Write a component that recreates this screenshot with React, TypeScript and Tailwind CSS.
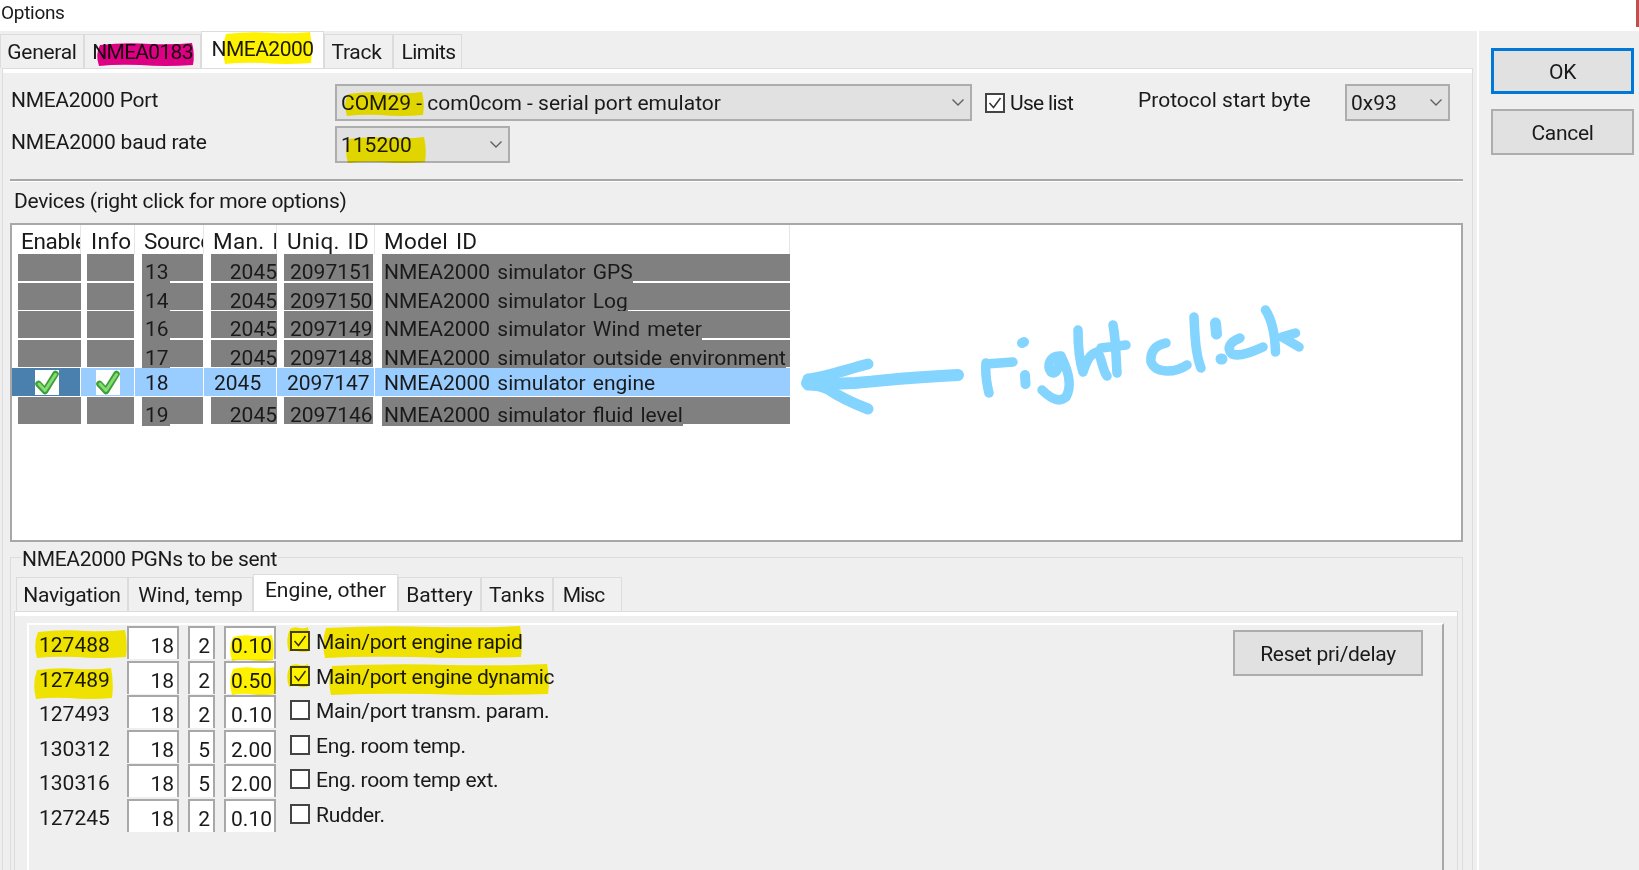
const devices = [
  { source: '13', man: '2045', uniq: '2097151', model: 'NMEA2000 simulator GPS' },
  { source: '14', man: '2045', uniq: '2097150', model: 'NMEA2000 simulator Log' },
  { source: '16', man: '2045', uniq: '2097149', model: 'NMEA2000 simulator Wind meter' },
  { source: '17', man: '2045', uniq: '2097148', model: 'NMEA2000 simulator outside environment' },
  { source: '18', man: '2045', uniq: '2097147', model: 'NMEA2000 simulator engine', selected: true },
  { source: '19', man: '2045', uniq: '2097146', model: 'NMEA2000 simulator fluid level' },
];

const pgns = [
  { pgn: '127488', src: '18', pri: '2', delay: '0.10', on: true, label: 'Main/port engine rapid' },
  { pgn: '127489', src: '18', pri: '2', delay: '0.50', on: true, label: 'Main/port engine dynamic' },
  { pgn: '127493', src: '18', pri: '2', delay: '0.10', on: false, label: 'Main/port transm. param.' },
  { pgn: '130312', src: '18', pri: '5', delay: '2.00', on: false, label: 'Eng. room temp.' },
  { pgn: '130316', src: '18', pri: '5', delay: '2.00', on: false, label: 'Eng. room temp ext.' },
  { pgn: '127245', src: '18', pri: '2', delay: '0.10', on: false, label: 'Rudder.' },
];

// marker strokes: [x1, y1, x2, y2]
const yellowMarks = [
  [223, 32, 312, 64],
  [345, 92, 424, 116],
  [346, 137, 426, 163],
  [35, 630, 127, 658],
  [34, 668, 113, 699],
  [230, 635, 274, 661],
  [230, 667, 276, 695],
  [287, 627, 310, 652],
  [323, 626, 522, 658],
  [287, 664, 310, 687],
  [329, 664, 549, 695],
];

function blob(x1: number, y1: number, x2: number, y2: number) {
  const w = x2 - x1;
  const my = (y1 + y2) / 2;
  return `M${x1 + 3} ${y1 + 2} Q${x1 + w * 0.3} ${y1 - 1} ${x1 + w * 0.55} ${y1 + 1} Q${x1 + w * 0.8} ${y1 + 2} ${x2 - 2} ${y1}
    Q${x2 + 1} ${my} ${x2 - 1} ${y2 - 1} Q${x1 + w * 0.7} ${y2 + 1} ${x1 + w * 0.45} ${y2 - 1} Q${x1 + w * 0.2} ${y2 - 2} ${x1 + 2} ${y2}
    Q${x1 - 2} ${my} ${x1 + 3} ${y1 + 2}Z`;
}

function Chevron() {
  return (
    <svg width="14" height="9" viewBox="0 0 14 9" fill="none" className="shrink-0">
      <path d="M1.5 1.5 7 7l5.500-5.500" stroke="#606060" strokeWidth="1.4" />
    </svg>
  );
}

function Combo({ value, className }: { value: string; className: string }) {
  return (
    <div className={`flex h-[37px] items-center justify-between border-2 border-[#adadad] bg-[#e1e1e1] pl-[4px] pr-[5px] tracking-normal ${className}`}>
      <span className="pt-[2px]">{value}</span>
      <Chevron />
    </div>
  );
}

function CheckBox({ on, className = '' }: { on: boolean; className?: string }) {
  return (
    <div className={`flex h-[20px] w-[20px] shrink-0 items-center justify-center border-2 border-[#444] bg-white ${className}`}>
      {on && (
        <svg width="16" height="16" viewBox="0 0 16 16" fill="none">
          <path d="M2.500 8 6.500 12.500 13.500 3" stroke="#333" strokeWidth="1.5" />
        </svg>
      )}
    </div>
  );
}

function GreenCheck() {
  return (
    <div className="flex h-[25px] w-[24px] items-center justify-center bg-white">
      <svg width="24" height="25" viewBox="0 0 24 25" fill="none" className="overflow-visible">
        <path d="M3.500 14 10 21 20.500 4" stroke="#3d9e3a" strokeWidth="6.500" strokeLinecap="round" strokeLinejoin="round" />
        <path d="M4 14 10 20.500 20.500 4.500" stroke="#84dd72" strokeWidth="3" strokeLinecap="round" strokeLinejoin="round" />
      </svg>
    </div>
  );
}

function DeviceRow({ d }: { d: (typeof devices)[number] }) {
  if (d.selected) {
    return (
      <div className="flex h-[28.5px] items-start gap-px">
        <div className="flex h-[28px] w-[68px] items-center justify-center bg-[#4a80ae] pl-[1px]"><GreenCheck /></div>
        <div className="flex h-[28px] w-[53px] items-center justify-center bg-[#99ccff]"><GreenCheck /></div>
        <div className="h-[28px] w-[68px] bg-[#99ccff] pl-[10px] leading-[31px]">{d.source}</div>
        <div className="h-[28px] w-[72px] bg-[#99ccff] pl-[10px] leading-[31px]">{d.man}</div>
        <div className="h-[28px] w-[97px] bg-[#99ccff] pl-[10px] leading-[31px]">{d.uniq}</div>
        <div className="h-[28px] w-[415px] bg-[#99ccff] pl-[9px] leading-[31px]">{d.model}</div>
      </div>
    );
  }
  // the text's grey backing runs over the white row line, the rest of the cell stops short of it
  const textBg = 'inline-block h-[29px] bg-[#808080] leading-[37px]';
  return (
    <div className="flex h-[28.5px]">
      <div className="w-[69px] pl-[6px]"><div className="h-[27px] bg-[#808080]" /></div>
      <div className="w-[54px] pl-[6px] pr-px"><div className="h-[27px] bg-[#808080]" /></div>
      <div className="w-[69px] pl-[7px] pr-px">
        <div className="h-[27px] bg-[#808080]"><span className={`${textBg} pl-[3px] pr-[1px]`}>{d.source}</span></div>
      </div>
      <div className="w-[73px] pl-[7px]">
        <div className="h-[27px] bg-[#808080] text-right leading-[37px]">{d.man}</div>
      </div>
      <div className="w-[98px] pl-[7px] pr-[2px]">
        <div className="h-[27px] bg-[#808080] pl-[6px] leading-[37px]">{d.uniq}</div>
      </div>
      <div className="w-[415px] pl-[7px]">
        <div className="h-[27px] whitespace-nowrap bg-[#808080]"><span className={`${textBg} pl-[2px]`}>{d.model}</span></div>
      </div>
    </div>
  );
}

function HeaderCell({ text, className }: { text: string; className: string }) {
  return (
    <div className={`h-full overflow-hidden whitespace-nowrap border-r border-[#e6e6e6] text-[22.5px] leading-[32px] ${className}`}>
      {text}
    </div>
  );
}

function PgnInput({ value, className }: { value: string; className: string }) {
  return (
    <div className={`h-[33px] border-x-2 border-t-2 border-[#a8a8a8] bg-white text-right leading-[36px] tracking-normal ${className}`}>
      {value}
    </div>
  );
}

function Annotations() {
  const stroke = '#83d4ff';
  return (
    <svg width="1639" height="870" viewBox="0 0 1639 870" fill="none" className="pointer-events-none absolute left-0 top-0">
      <g stroke={stroke} strokeLinecap="round" strokeLinejoin="round" strokeWidth="12">
        {/* arrow */}
        <path d="M958 375C910 377 880 381 855 383C835 384 820 384 807 383" />
        <path d="M868 364C845 370 825 377 808 379" strokeWidth="11" />
        <path d="M868 409C850 402 838 396 828 389C820 385 812 385 808 385" strokeWidth="11" />
      </g>
      <g stroke={stroke} strokeLinecap="round" strokeLinejoin="round" strokeWidth="9.500">
        {/* r */}
        <path d="M986 363C985 375 987 385 989 393M986 364 1013 362" />
        {/* i */}
        <path d="M1022 343 1024 342M1025 375 1025.500 384" strokeWidth="10" />
        {/* g */}
        <path d="M1061 356C1050 355 1046 366 1051 372C1057 376 1059 366 1061 356C1068 370 1073 385 1066 397C1058 404 1048 396 1042 390" />
        {/* h */}
        <path d="M1078 330C1078 345 1079 360 1083 372C1087 360 1090 354 1097 352C1102 356 1102 370 1107 376" />
        {/* t */}
        <path d="M1113 325C1116 340 1116 358 1117 373M1101 348 1126 345" />
        {/* c */}
        <path d="M1166 343C1155 345 1150 352 1151 362C1156 374 1175 373 1187 365" />
        {/* l */}
        <path d="M1194 317C1195 340 1196 355 1201 368" />
        {/* i */}
        <path d="M1215.500 323 1216.500 334M1221 359 1222 359" strokeWidth="11" />
        {/* c */}
        <path d="M1240 338C1230 342 1226 348 1232 354C1240 357 1252 352 1263 347" />
        {/* k */}
        <path d="M1265.500 310C1272 320 1275 335 1275.500 352M1295.500 333 1282 337 1299 347" />
      </g>
    </svg>
  );
}

function Highlights() {
  return (
    <svg width="1639" height="870" viewBox="0 0 1639 870" className="pointer-events-none absolute left-0 top-0 mix-blend-multiply">
      <path d={blob(97, 43, 194, 66)} fill="#ec008c" />
      {yellowMarks.map((m) => (
        <path key={m.join()} d={blob(m[0], m[1], m[2], m[3])} fill="#fff200" />
      ))}
    </svg>
  );
}

export default function App() {
  const tabBase = 'flex h-[34px] items-center justify-center border-x border-t border-[#dcdcdc] bg-[#f0f0f0] pt-[2px]';
  const tabActive = 'flex items-start justify-center border-x border-t border-[#dcdcdc] bg-white';

  return (
    <div className="relative flex h-[870px] w-[1639px] flex-col overflow-hidden bg-[#efefef] font-['Roboto',sans-serif] text-[21px] tracking-[-0.3px] text-[#1a1a1a]">
      {/* title bar */}
      <div className="flex h-[31px] shrink-0 items-start justify-between bg-white pl-[1px]">
        <span className="text-[19px] leading-[26px]">Options</span>
        <div className="h-[27px] w-[3px] bg-[#c0504d]" />
      </div>

      <div className="flex min-h-0 flex-1">
        <div className="flex w-[1473px] shrink-0 flex-col">
          {/* main tabs */}
          <div className="flex h-[37px] shrink-0 items-end">
            <div className={`${tabBase} w-[84px]`}>General</div>
            <div className={`${tabBase} w-[117px] tracking-[-0.7px]`}>NMEA0183</div>
            <div className={`${tabActive} h-[37px] w-[123px] pt-[2px] tracking-[-0.5px]`}>NMEA2000</div>
            <div className={`${tabBase} w-[69px] pr-[4px]`}>Track</div>
            <div className={`${tabBase} w-[69px] pl-[2px] tracking-[-0.6px]`}>Limits</div>
          </div>

          {/* main panel */}
          <div className="ml-[2px] min-h-0 flex-1 border-x border-t border-[#dcdcdc] pb-0 pl-[7px] pr-[9px] pt-[15px] shadow-[inset_0_4px_0_#ffffff]">
            <div className="flex items-start">
              <span className="ml-[1px] w-[324px] shrink-0 pt-[1px] leading-[30px]">NMEA2000 Port</span>
              <Combo value="COM29 - com0com - serial port emulator" className="w-[637px]" />
              <CheckBox on className="ml-[13px] mt-[9px]" />
              <span className="ml-[5px] w-[128px] shrink-0 pt-[4px] leading-[30px] tracking-[-0.7px]">Use list</span>
              <span className="w-[207px] shrink-0 pt-[1px] leading-[30px] tracking-[0px]">Protocol start byte</span>
              <Combo value="0x93" className="w-[105px]" />
            </div>
            <div className="mt-[5px] flex items-start">
              <span className="ml-[1px] w-[324px] shrink-0 pt-[1px] leading-[30px] tracking-[-0.2px]">NMEA2000 baud rate</span>
              <Combo value="115200" className="w-[175px]" />
            </div>

            <div className="mt-[16px] h-[3px] border-b border-white bg-[#a8a8a8]" />
            <div className="ml-[4px] mt-[4px] h-[37px] leading-[30px]">Devices (right click for more options)</div>

            {/* device table */}
            <div className="h-[319px] border-2 border-[#a8a8a8] bg-white tracking-normal [word-spacing:2px]">
              <div className="flex h-[29px]">
                <HeaderCell text="Enable" className="w-[69px] pl-[9px] tracking-[-0.3px]" />
                <HeaderCell text="Info" className="w-[54px] pl-[10px] tracking-[0.3px]" />
                <HeaderCell text="Source" className="w-[69px] pl-[9px] tracking-[-0.3px]" />
                <HeaderCell text="Man. ID" className="w-[73px] pl-[9px] tracking-[0.3px]" />
                <HeaderCell text="Uniq. ID" className="w-[98px] pl-[10px] tracking-[0.3px]" />
                <HeaderCell text="Model ID" className="w-[415px] pl-[9px] tracking-[0.3px]" />
              </div>
              {devices.map((d) => (
                <DeviceRow key={d.source} d={d} />
              ))}
            </div>

            {/* PGN group */}
            <div className="relative mt-[15px] border border-[#dcdcdc] pl-[5px] pr-[4px] pt-[16px]">
              <span className="absolute -top-[13px] left-[10px] bg-[#efefef] pl-[1px] pr-[1px] leading-[28px]">NMEA2000 PGNs to be sent</span>
              <div className="flex h-[37px] items-end tracking-normal">
                <div className={`${tabBase} w-[112px] tracking-[-0.3px]`}>Navigation</div>
                <div className={`${tabBase} w-[125px]`}>Wind, temp</div>
                <div className={`${tabActive} h-[37px] w-[145px]`}>Engine, other</div>
                <div className={`${tabBase} w-[83px]`}>Battery</div>
                <div className={`${tabBase} w-[72px]`}>Tanks</div>
                <div className={`${tabBase} w-[69px] pr-[8px] tracking-[-1px]`}>Misc</div>
              </div>

              <div className="ml-[-2px] h-[260px] border-x border-t border-[#dcdcdc] pl-[12px] pr-[13px] pt-[11px] shadow-[inset_0_4px_0_#ffffff]">
                <div className="flex h-full border-l-2 border-r-2 border-t-2 border-white border-r-[#a8a8a8] pl-[12px]">
                  <div className="flex-1 pt-[1px]">
                    {pgns.map((p) => (
                      <div key={p.pgn} className="flex h-[34.6px] items-start">
                        <div className="-ml-[2px] w-[88px] shrink-0 leading-[38px] tracking-[0px]">{p.pgn}</div>
                        <PgnInput value={p.src} className="w-[52px] shrink-0 pr-[3px]" />
                        <PgnInput value={p.pri} className="ml-[9px] w-[27px] shrink-0 pr-[3px]" />
                        <PgnInput value={p.delay} className="ml-[9px] w-[52px] shrink-0 pr-[2px]" />
                        <CheckBox on={p.on} className="ml-[14px] mt-[5px]" />
                        <span className="ml-[6px] whitespace-nowrap leading-[32px]">{p.label}</span>
                      </div>
                    ))}
                  </div>
                  <div className="mr-[19px] mt-[5px] flex h-[46px] w-[190px] items-center justify-center border-2 border-[#adadad] bg-[#e1e1e1] pt-[3px]">
                    Reset pri/delay
                  </div>
                </div>
              </div>
            </div>
          </div>
        </div>

        {/* right buttons */}
        <div className="ml-[4px] flex flex-1 flex-col border-l-2 border-white pl-[12px] pr-[5px] pt-[17px]">
          <div className="flex h-[46px] items-center justify-center border-[3px] border-[#0078d7] bg-[#e1e1e1] pt-[3px]">OK</div>
          <div className="mt-[15px] flex h-[46px] items-center justify-center border-2 border-[#adadad] bg-[#e1e1e1] pt-[3px]">Cancel</div>
        </div>
      </div>

      <Highlights />
      <Annotations />
    </div>
  );
}
